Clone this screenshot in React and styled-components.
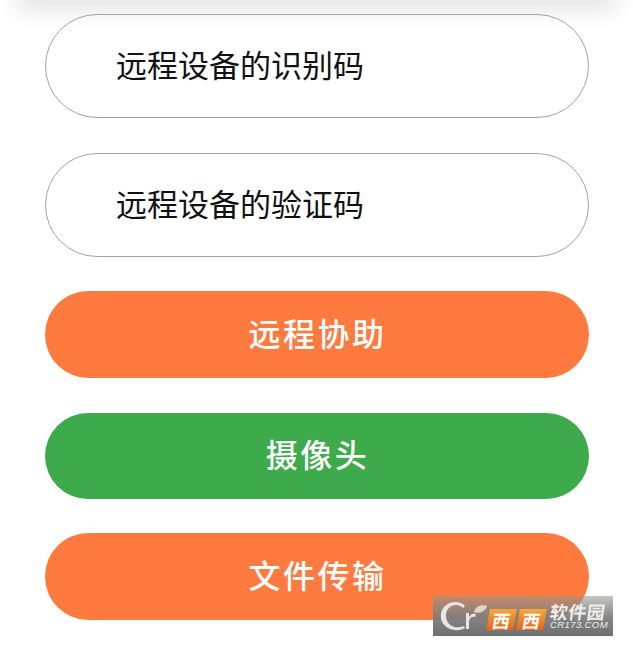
import React from 'react';
import styled, { createGlobalStyle } from 'styled-components';

const GlobalStyle = createGlobalStyle`
  html, body {
    margin: 0;
    padding: 0;
    background: #fff;
  }
  body {
    font-family: "Liberation Sans", "Noto Sans CJK SC", sans-serif;
  }
`;

const Page = styled.div`
  position: relative;
  width: 633px;
  height: 646px;
  overflow: hidden;
  background: #fff;
`;

const TopBar = styled.div`
  height: 0;
  margin: 0 24px;
  box-shadow: 0 0 22px 7px rgba(0, 0, 0, 0.17);
`;

const Form = styled.div`
  display: flex;
  flex-direction: column;
  padding: 14px 44px 0 45px;
`;

const Field = styled.div`
  box-sizing: border-box;
  height: 104px;
  margin-bottom: ${p => p.$gap}px;
  padding: 0 0 6px 70px;
  display: flex;
  align-items: center;
  border: 1px solid #a3a3a0;
  border-radius: 52px;
  font-family: "Noto Sans CJK SC", sans-serif;
  font-size: 31px;
  color: #111;
`;

const ActionButton = styled.button`
  height: ${p => p.$height}px;
  margin-bottom: ${p => p.$gap}px;
  padding: 0 0 6px 1px;
  border: 0;
  border-radius: 44px;
  background: ${p => p.$color};
  color: #fff;
  font-family: "Noto Sans CJK SC", sans-serif;
  font-size: 32px;
  font-weight: 500;
  letter-spacing: 2.5px;
`;

const Watermark = styled.div`
  position: absolute;
  left: 433px;
  top: 596px;
  width: 180px;
  height: 40px;
  display: flex;
  align-items: center;
  padding-left: 7px;
  box-sizing: border-box;
  background: linear-gradient(to bottom, rgba(150, 150, 140, 0.55), rgba(125, 125, 125, 0.95) 55%, #6f6f6f);
`;

const LogoMark = styled.svg`
  width: 48px;
  height: 34px;
  flex-shrink: 0;
`;

const OrangeBadge = styled.span`
  width: 27px;
  height: 21px;
  margin: 7px 3px 0 0;
  display: flex;
  align-items: center;
  justify-content: center;
  background: linear-gradient(to bottom, #f7a83c, #e8641c);
  transform: skewX(-10deg);
  color: #fff;
  font-family: "Noto Sans CJK SC", sans-serif;
  font-size: 18px;
  font-weight: 700;
  line-height: 1;
`;

const BrandText = styled.div`
  margin-left: 2px;
  display: flex;
  flex-direction: column;
  align-items: flex-start;
  color: #eeeeee;
  line-height: 1;
`;

const BrandName = styled.span`
  font-family: "Noto Sans CJK SC", sans-serif;
  font-size: 18px;
  font-weight: 700;
  letter-spacing: 0.5px;
  transform: skewX(-8deg);
`;

const BrandUrl = styled.span`
  font-size: 9.5px;
  font-style: italic;
  letter-spacing: 0.4px;
`;

export default function App() {
  return (
    <Page>
      <GlobalStyle />
      <TopBar />
      <Form>
        <Field $gap={35}>远程设备的识别码</Field>
        <Field $gap={34}>远程设备的验证码</Field>
        <ActionButton $color="#ff7a3f" $height={87} $gap={35}>远程协助</ActionButton>
        <ActionButton $color="#3dab4b" $height={86} $gap={34}>摄像头</ActionButton>
        <ActionButton $color="#ff7a3f" $height={87} $gap={0}>文件传输</ActionButton>
      </Form>
      <Watermark>
        <LogoMark viewBox="0 0 48 34">
          <path d="M25 7 C19 0 3 2 1 15 C-1 28 14 35 25 29 L24 27 C15 31 5 26 6 15 C7 6 18 3 23 9 Z" fill="#e6e6e6" />
          <path d="M26 30 L26 14 L29 14 L29 18 C31 15 33 14 36 15 L35 18 C32 17 29 19 29 23 L29 30 Z" fill="#e6e6e6" />
          <path d="M34 13 C35 8 41 5 47 7 C46 12 40 15 34 13 Z" fill="#d8d8d0" />
        </LogoMark>
        <OrangeBadge>西</OrangeBadge>
        <OrangeBadge>西</OrangeBadge>
        <BrandText>
          <BrandName>软件园</BrandName>
          <BrandUrl>CR173.COM</BrandUrl>
        </BrandText>
      </Watermark>
    </Page>
  );
}
